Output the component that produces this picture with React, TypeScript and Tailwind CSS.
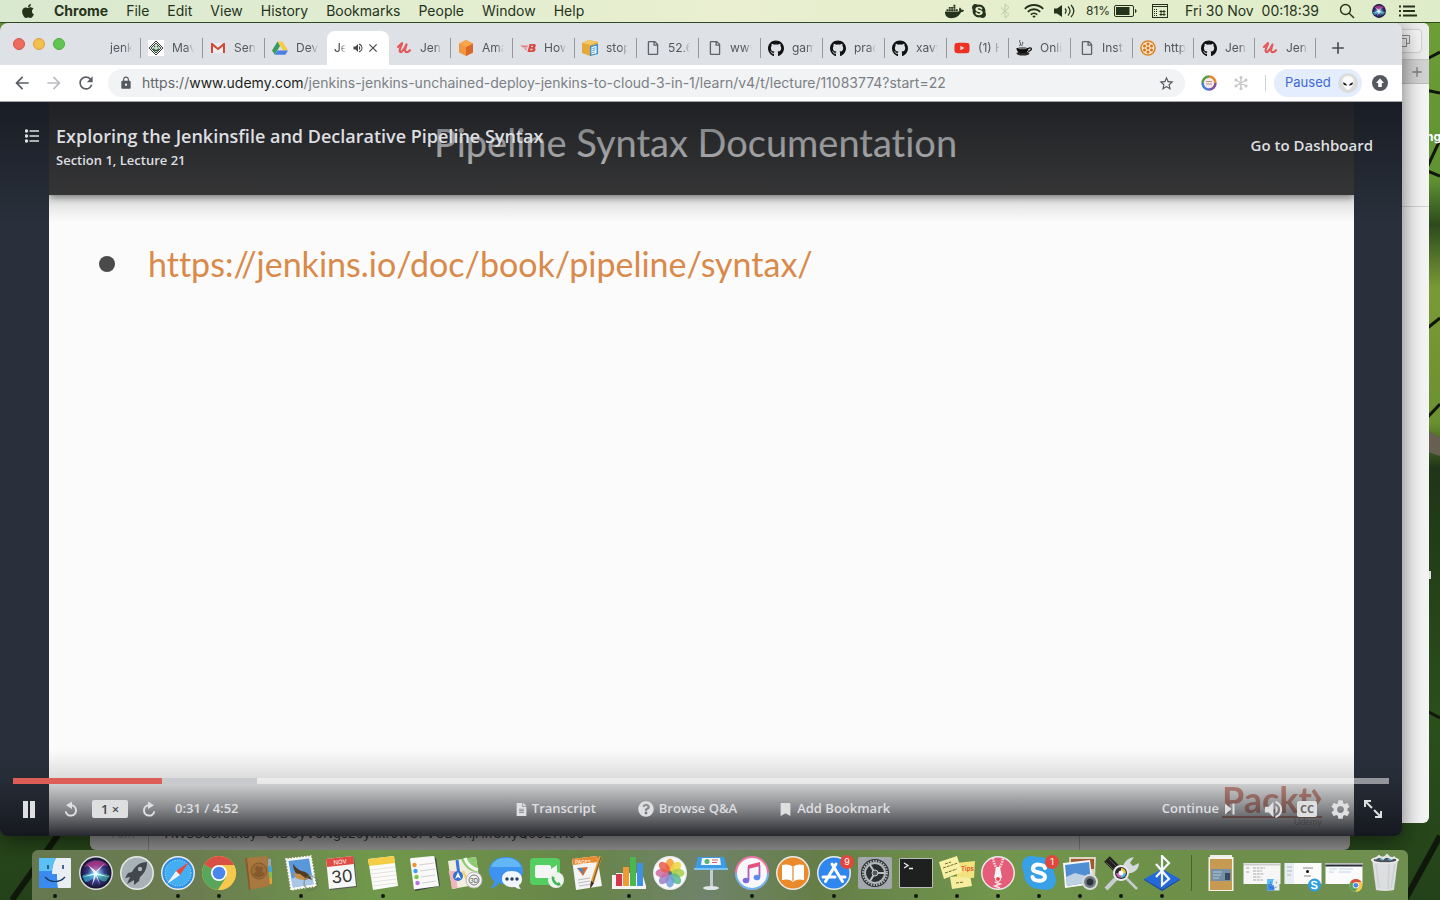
import React from "react";
import { FaApple, FaDocker, FaSkype, FaGithub, FaYoutube, FaFileAlt, FaQuestionCircle, FaBookmark, FaRegFile } from "react-icons/fa";
import {
  MdArrowBack,
  MdArrowForward,
  MdRefresh,
  MdLock,
  MdStarBorder,
  MdVolumeUp,
  MdClose,
  MdAdd,
  MdSettings,
} from "react-icons/md";

const menuItems = ["File", "Edit", "View", "History", "Bookmarks", "People", "Window", "Help"];

/* ---------- favicons ---------- */

const Udemy = () => (
  <svg viewBox="0 0 16 16" className="size-4" fill="none" stroke="#e45a5a" strokeWidth="2.2" strokeLinecap="round" strokeLinejoin="round">
    <path d="M2 7 C3.500 5.500 5 4 6 3.200 C5.500 6 3.300 9 3.600 11 C4 13.500 7.500 11.500 10.500 4.500 C9.500 8 8.300 11.500 9.800 12 C11.300 12.400 12.800 11.500 14 10.200" />
  </svg>
);

const Maven = () => (
  <svg viewBox="0 0 16 16" className="size-4">
    <rect width="16" height="16" fill="#fff" />
    <path d="M8 1 15 8 8 15 1 8Z" fill="none" stroke="#333" strokeWidth="1" />
    <path d="M8 3 13 8 8 13 3 8Z" fill="#cfe0cf" stroke="#444" strokeWidth="1" />
    <path d="M5.500 8.500a2.500 2 0 0 0 5 0M6 6.500h1.200M9 6.500h1.200" stroke="#255c35" fill="none" strokeWidth="1.300" />
  </svg>
);

const Gmail = () => (
  <svg viewBox="0 0 16 16" className="size-4">
    <path d="M1 3h14v10H1z" fill="#ececec" />
    <path d="M1 13V3h1.500L8 7.800 13.500 3H15v10h-2V6.200L8 10.300 3 6.200V13z" fill="#d14836" />
  </svg>
);

const Drive = () => (
  <svg viewBox="0 0 16 16" className="size-4">
    <path d="M5.500 1.500h5L16 10.500h-5z" fill="#f8cb45" />
    <path d="M5.500 1.500 8 6 2.800 14.800 0 10.500z" fill="#3a9b5c" />
    <path d="M5.500 10.500H16l-2.700 4.300H2.800z" fill="#4a7fe8" />
  </svg>
);

const Aws = () => (
  <svg viewBox="0 0 16 16" className="size-4">
    <path d="M8 0 15 3.500v9L8 16 1 12.500v-9z" fill="#f0963c" />
    <path d="M8 7v9l7-3.500v-9z" fill="#d9662a" />
    <path d="M8 0 15 3.500 8 7 1 3.500z" fill="#f6a54a" />
  </svg>
);

const Bmc = () => (
  <svg viewBox="0 0 16 16" className="size-4">
    <path d="M0 5.500h8l-.7 2H3zM3.500 8.500h3.500l-.7 2z" fill="#e08080" />
    <path d="M9.500 4h4.500c2.500 0 2.200 3 .6 3.700 1.700.6 1 4.300-1.900 4.300H7.500z M11.300 5.800 11 7h1.800l.3-1.200zM10.500 8.700l-.4 1.600h2.200l.3-1.600z" fill="#dc4a44" fillRule="evenodd" />
  </svg>
);

const Stopbox = () => (
  <svg viewBox="0 0 16 16" className="size-4">
    <path d="M0 3 7 0l9 2v11l-8 3-8-3z" fill="#e5a83b" />
    <path d="M0 3 7 0l9 2-8 3z" fill="#f3c766" />
    <path d="m8 6 8-2v10l-8 2z" fill="#3b8ed0" />
    <path d="m9.500 7 5-1.200v7.400l-5 1.200z" fill="#fff" />
    <path d="m10.500 8.500 3-.7M10.500 10.500l3-.7M10.500 12.500l2-.5" stroke="#3b8ed0" />
  </svg>
);

const Page = () => <FaRegFile className="ml-px size-3.5 text-[#5f6368]" />;
const Github = () => <FaGithub className="size-[17px] text-[#111]" />;
const Youtube = () => <FaYoutube className="size-[18px] text-[#ee3124]" />;

const Coffee = () => (
  <svg viewBox="0 0 16 16" className="size-4">
    <path d="M4.500 0c-3 1.500 2 3-1 6M6 2c2.500 1-1 2 0 4" stroke="#444" fill="none" />
    <ellipse cx="7" cy="13.500" rx="6.500" ry="2" fill="#2a2a2a" />
    <path d="M.5 8h12c0 3.500-2 5-6 5S.5 11.500.5 8z" fill="#0c0c0c" />
    <path d="M12 8.500c4-2 5 1.500 0 3" stroke="#0c0c0c" fill="none" strokeWidth="1.200" />
    <ellipse cx="6.500" cy="8.200" rx="4.500" ry="1.100" fill="#777" />
  </svg>
);

const Flower = () => (
  <svg viewBox="0 0 16 16" className="size-4">
    <circle cx="8" cy="8" r="7.800" fill="#dd8228" />
    <circle cx="8" cy="8" r="6.300" fill="#fbe7c8" />
    <g fill="#d0721c">
      <circle cx="8" cy="8" r="1.500" />
      <circle cx="8" cy="4" r="1.500" />
      <circle cx="8" cy="12" r="1.500" />
      <circle cx="4.500" cy="6" r="1.500" />
      <circle cx="11.500" cy="6" r="1.500" />
      <circle cx="4.500" cy="10" r="1.500" />
      <circle cx="11.500" cy="10" r="1.500" />
    </g>
  </svg>
);

type Tab = { text: string; icon?: React.ComponentType; narrow?: boolean };

const tabsBefore: Tab[] = [
  { text: "jenkins" },
  { text: "Maven", icon: Maven },
  { text: "Sent", icon: Gmail },
  { text: "DevOps", icon: Drive },
];

const tabsAfter: Tab[] = [
  { text: "Jenkins", icon: Udemy },
  { text: "Amazon", icon: Aws },
  { text: "How", icon: Bmc },
  { text: "stop", icon: Stopbox },
  { text: "52.66", icon: Page },
  { text: "www.", icon: Page },
  { text: "game", icon: Github },
  { text: "pract", icon: Github },
  { text: "xavy", icon: Github },
  { text: "(1) How", icon: Youtube },
  { text: "Online", icon: Coffee },
  { text: "Install", icon: Page },
  { text: "https", icon: Flower, narrow: true },
  { text: "Jenkins", icon: Github, narrow: true },
  { text: "Jenkins", icon: Udemy, narrow: true },
];

function TabItem({ tab, divider = true }: { tab: Tab; divider?: boolean }) {
  const Icon = tab.icon;
  return (
    <button className={`flex h-[34px] shrink-0 items-center pl-[7px] ${tab.narrow ? "w-[61px]" : "w-[62px]"}`}>
      <span className="flex size-4 shrink-0 items-center justify-center">{Icon && <Icon />}</span>
      <span className="ml-2 w-[22px] overflow-hidden text-left text-xs whitespace-nowrap text-[#54575c] [mask-image:linear-gradient(to_right,black_65%,transparent)]">
        {tab.text}
      </span>
      {divider && <span className="ml-auto h-5 w-px bg-[#94979c]" />}
    </button>
  );
}

/* ---------- menu bar ---------- */

function MenuBar() {
  return (
    <header className="relative z-10 flex h-[23px] items-center border-b border-[#2e4a22] bg-linear-to-r from-[#d9e9cf] via-[#e9efd0] to-[#dfecc9] pr-[23px] pl-5 text-sm text-[#26331c]">
      <FaApple className="size-4" />
      <nav className="ml-[18px] flex items-center gap-[18px]">
        <b className="font-bold">Chrome</b>
        {menuItems.map((m) => (
          <span key={m}>{m}</span>
        ))}
      </nav>
      <div className="ml-auto flex items-center">
        <FaDocker className="size-[19px]" />
        <FaSkype className="ml-[7px] size-4" />
        <svg viewBox="0 0 10 16" className="ml-[13px] h-4 w-2.5" fill="none" stroke="#bccbaa">
          <path d="M1 4.500 9 11.500 5 15V1l4 3.500L1 11.500" />
        </svg>
        <svg viewBox="0 0 20 16" className="ml-3.5 h-4 w-5" fill="none" stroke="currentColor" strokeWidth="1.800">
          <path d="M.8 5.800a13 13 0 0 1 18.400 0M3.800 8.800a8.800 8.800 0 0 1 12.400 0M6.800 11.600a4.600 4.600 0 0 1 6.400 0" />
          <path d="M8.300 13.300a2.400 2.400 0 0 1 3.400 0L10 15z" fill="currentColor" stroke="none" />
        </svg>
        <svg viewBox="0 0 22 16" className="ml-2.5 h-4 w-[22px]">
          <path d="M0 5.500h3L8 2v12L3 10.500H0z" fill="currentColor" />
          <path d="M11 5.500c1.300 1.500 1.300 3.500 0 5M14 3.500c2.500 2.700 2.500 6.300 0 9M17 2c3.500 3.700 3.500 8.300 0 12" fill="none" stroke="currentColor" strokeWidth="1.200" />
        </svg>
        <span className="ml-2.5 text-xs">81%</span>
        <svg viewBox="0 0 24 12" className="ml-1 h-3 w-6">
          <rect x="0.500" y="0.500" width="19" height="11" rx="1.500" fill="none" stroke="currentColor" />
          <rect x="2" y="2" width="13.500" height="8" fill="currentColor" />
          <path d="M21 4c2 .5 2 3.500 0 4z" fill="currentColor" />
        </svg>
        <svg viewBox="0 0 16 14" className="ml-3.5 h-3.5 w-4" fill="none" stroke="currentColor">
          <rect x="0.500" y="0.500" width="15" height="13" />
          <path d="M0 2.500h16" />
          <path d="M2 1.500h1M4 1.500h1" stroke="#e3edcc" />
          <path d="M2.500 5v8M4.500 5v8" strokeDasharray="1 1" />
          <path d="M9 6v6M12 6v6M7.500 7.500h6M7.500 10.500h6" />
        </svg>
        <span className="ml-[17px] whitespace-pre">Fri 30 Nov{"  "}00:18:39</span>
        <svg viewBox="0 0 16 16" className="ml-5 size-4" fill="none" stroke="currentColor" strokeWidth="1.400">
          <circle cx="6.500" cy="6.500" r="5" />
          <path d="m10.200 10.200 4.800 4.800" />
        </svg>
        <span className="ml-4">
          <SiriOrb className="size-4" />
        </span>
        <svg viewBox="0 0 18 12" className="ml-3 h-3 w-[18px]" stroke="currentColor" strokeWidth="1.800">
          <path d="M0 1.500h2M4 1.500h12M0 6h2M4 6h12M0 10.500h2M4 10.500h14" />
        </svg>
      </div>
    </header>
  );
}

function SiriOrb({ className }: { className: string }) {
  return (
    <svg viewBox="0 0 36 36" className={className}>
      <defs>
        <radialGradient id="siri">
          <stop offset="0" stopColor="#e8ffff" />
          <stop offset=".2" stopColor="#7cb4dc" />
          <stop offset=".55" stopColor="#3b3a8a" />
          <stop offset="1" stopColor="#14112c" />
        </radialGradient>
      </defs>
      <circle cx="18" cy="18" r="17" fill="#dcdde0" />
      <circle cx="18" cy="18" r="15.500" fill="url(#siri)" />
      <path d="M6 12c5-8 18-9 24-1-6-2-9 2-12 7-4-5-7-8-12-6z" fill="#d83a90" opacity=".6" />
      <path d="M4 21c5-3 9-3 14-3-3 6-7 9-11 9z" fill="#39c9e6" opacity=".6" />
      <path d="M32 21c-5-3-9-3-14-3 3 6 6 10 10 8z" fill="#42e0c0" opacity=".5" />
      <path d="M18 16 19 18 31 22 19 20 22 30 18 21 14 31 16 20 5 22 16 18 10 10 18 16 27 8 19 17z" fill="#f4ffff" opacity=".85" />
    </svg>
  );
}

/* ---------- browser chrome ---------- */

function TabStrip() {
  return (
    <div className="flex h-[42px] items-end overflow-hidden bg-[#dee1e6] pl-[13px]">
      <div className="mr-3.5 flex gap-2 self-center">
        <button aria-label="Close window" className="size-3 rounded-full border border-[#d9524a] bg-[#ed6a5e]" />
        <button aria-label="Minimise window" className="size-3 rounded-full border border-[#dba038] bg-[#f5bf4f]" />
        <button aria-label="Zoom window" className="size-3 rounded-full border border-[#4cab3d] bg-[#61c554]" />
      </div>
      {tabsBefore.map((t, i) => (
        <TabItem key={t.text} tab={t} divider={i < 3} />
      ))}
      <div className="flex h-[34px] w-[62px] shrink-0 items-center rounded-t-lg bg-white pl-[7px] text-xs text-[#3c4043]">
        <span className="w-3 overflow-hidden whitespace-nowrap [mask-image:linear-gradient(to_right,black_50%,transparent)]">Jenkins</span>
        <MdVolumeUp className="ml-1.5 size-3 text-[#45494d]" />
        <button aria-label="Close tab" className="ml-0.5">
          <MdClose className="size-3.5 text-[#45494d]" />
        </button>
      </div>
      {tabsAfter.map((t, i) => (
        <TabItem key={i} tab={t} />
      ))}
      <button aria-label="New tab" className="ml-3 flex h-[34px] items-center">
        <MdAdd className="size-5 text-[#494c50]" />
      </button>
    </div>
  );
}

function Toolbar() {
  return (
    <div className="flex h-[37px] items-center border-b border-[#a4a6a9] bg-white pr-3.5 pl-3.5 text-[#5a5d61]">
      <button aria-label="Back">
        <MdArrowBack className="-mx-0.5 size-5" />
      </button>
      <button aria-label="Forward" className="ml-4">
        <MdArrowForward className="-mx-0.5 size-5 text-[#bbbdc0]" />
      </button>
      <button aria-label="Reload" className="ml-4">
        <MdRefresh className="-mx-0.5 size-5" />
      </button>
      <div className="ml-3.5 flex h-7 flex-1 items-center overflow-hidden rounded-full bg-[#f1f3f4] pr-2.5 pl-[11px]">
        <MdLock className="size-3.5 shrink-0 text-[#55585c]" />
        <span className="ml-[9px] flex-1 overflow-hidden text-sm whitespace-nowrap text-[#7b8085]">
          <span className="text-[#63676b]">https://</span>
          <span className="text-[#1d1f22]">www.udemy.com</span>
          /jenkins-jenkins-unchained-deploy-jenkins-to-cloud-3-in-1/learn/v4/t/lecture/11083774?start=22
        </span>
        <MdStarBorder className="size-[17px] shrink-0 text-[#55585c]" />
      </div>
      <svg viewBox="0 0 16 16" className="ml-4 size-4" fill="none" strokeWidth="2.500">
        <circle cx="8" cy="8" r="5.500" fill="#f6e8e8" />
        <path d="M8 1.500A6.500 6.500 0 0 1 14.500 8" stroke="#e08a33" />
        <path d="M14.500 8A6.500 6.500 0 0 1 8 14.500" stroke="#7d4fa0" />
        <path d="M8 14.500A6.500 6.500 0 0 1 1.500 8" stroke="#3f80d8" />
        <path d="M1.500 8A6.500 6.500 0 0 1 8 1.500" stroke="#5a9a4a" />
        <path d="M5 6.500h6M5 9h6" stroke="#c09090" strokeWidth="1" />
      </svg>
      <svg viewBox="0 0 16 16" className="ml-4 size-4" stroke="#c6c7c9" strokeWidth="1.400" strokeLinecap="round">
        <path d="M8 2v12M2.800 5l10.400 6M13.200 5 2.800 11" />
        <g fill="#c6c7c9" stroke="none">
          <circle cx="8" cy="2.500" r="1.500" />
          <circle cx="8" cy="13.500" r="1.500" />
          <circle cx="3" cy="5" r="1.500" />
          <circle cx="13" cy="5" r="1.500" />
          <circle cx="3" cy="11" r="1.500" />
          <circle cx="13" cy="11" r="1.500" />
        </g>
      </svg>
      <span className="ml-4 h-4 w-px bg-[#cfd1d4]" />
      <button className="ml-2 flex h-7 w-[88px] items-center justify-between rounded-full bg-[#e4edfd] pr-1 pl-[11px] text-[13px] text-[#3c68d8]">
        Paused
        <svg viewBox="0 0 20 20" className="size-5">
          <circle cx="10" cy="10" r="10" fill="#dcdcdc" />
          <path d="M10 3c4.500 0 6 3 5.500 6.500S12 17 10 17s-5-4-5.500-7.500S5.500 3 10 3z" fill="#fafafa" />
          <path d="M5 9.500c2 0 4 1.500 4 3-2 .5-4-1-4-3zM15 9.500c-2 0-4 1.500-4 3 2 .5 4-1 4-3z" fill="#222" />
        </svg>
      </button>
      <svg viewBox="0 0 16 16" className="ml-2.5 size-4">
        <circle cx="8" cy="8" r="8" fill="#55585c" />
        <path d="M8 3.500 12 8H9.800v4H6.200V8H4z" fill="#fff" />
      </svg>
    </div>
  );
}

/* ---------- lecture player ---------- */

const RewindIcon = ({ className = "" }: { className?: string }) => (
  <svg viewBox="0 0 16 16" className={`size-4 ${className}`} fill="none" stroke="currentColor" strokeWidth="2">
    <path d="M7 4.200a5.200 5.200 0 1 1-5.300 6.200" />
    <path d="M8 .5v7.400L2 4.200z" fill="currentColor" stroke="none" />
  </svg>
);

function Slide() {
  return (
    <section className="relative mr-12 ml-[49px] flex flex-col overflow-hidden bg-[#fbfbfb] font-['Lato',sans-serif] font-normal [font-variant-ligatures:none] [grid-area:1/1]">
      <h1 className="flex h-[93px] items-center overflow-hidden bg-[#3b3b3b] pb-3 pl-[385px] text-[38px] whitespace-nowrap text-[#ececec] shadow-[0_2px_8px_rgba(0,0,0,0.5)]">
        Pipeline Syntax Documentation
      </h1>
      <ul className="mt-[46px] pl-[50px]">
        <li className="flex items-center text-[34px] whitespace-nowrap text-[#d98a4a]">
          <span className="mr-[33px] size-4 rounded-full bg-[#4a4a4a]" />
          <a href="https://jenkins.io/doc/book/pipeline/syntax/" className="leading-[46px]">
            https://jenkins.io/doc/book/pipeline/syntax/
          </a>
        </li>
      </ul>
      <div className="absolute right-8 bottom-2 w-[100px] text-[#c4543a] opacity-60">
        <div className="flex items-center justify-between border-b-2 border-[#c4543a] text-[36px] leading-[34px] font-bold">
          Packt
          <svg viewBox="0 0 10 22" className="h-[22px] w-2.5 shrink-0" fill="none" stroke="currentColor" strokeWidth="4">
            <path d="m1 2 6 9-6 9" />
          </svg>
        </div>
        <div className="h-2.5 text-right text-[9px] leading-[8px] text-[#777]">Udemy</div>
      </div>
    </section>
  );
}

function Player() {
  return (
    <main className="grid min-h-0 flex-1 grid-cols-1 grid-rows-1 bg-[#29303b] font-['Open_Sans',sans-serif] font-semibold text-[#dedfe1]">
      <Slide />
      <div className="relative flex flex-col justify-between [grid-area:1/1]">
        <div className="flex h-[120px] items-start bg-linear-to-b from-[#0e1016]/60 to-transparent pr-[29px] pl-[25px]">
          <button aria-label="Course content" className="mt-[27px]">
            <svg viewBox="0 0 14 14" className="size-3.5" stroke="currentColor" strokeWidth="1.500" fill="currentColor">
              <path d="M4.500 2H14M4.500 7H14M4.500 12H14" />
              <circle cx="1.500" cy="2" r="1" />
              <circle cx="1.500" cy="7" r="1" />
              <circle cx="1.500" cy="12" r="1" />
            </svg>
          </button>
          <div className="mt-[22px] ml-[17px]">
            <h2 className="text-lg leading-6">Exploring the Jenkinsfile and Declarative Pipeline Syntax</h2>
            <p className="text-[13px] leading-6">Section 1, Lecture 21</p>
          </div>
          <a href="#dashboard" className="mt-[31px] ml-auto text-[15px] leading-6">
            Go to Dashboard
          </a>
        </div>

        <div className="flex h-[86px] flex-col bg-[linear-gradient(to_bottom,transparent,rgba(20,22,28,0.12)_30%,rgba(20,22,28,0.2)_40%,rgba(20,22,28,0.5)_68%,rgba(20,22,28,0.92))] pt-7">
          <input
            type="range"
            aria-label="Seek"
            min={0}
            max={292}
            defaultValue={31}
            className="mx-[13px] block h-1.5 shrink-0 appearance-none bg-[linear-gradient(to_right,#dc5e57_10.8%,#c9cacd_10.8%,#c9cacd_17.7%,rgba(255,255,255,0.5)_17.7%)] [&::-webkit-slider-thumb]:size-0 [&::-webkit-slider-thumb]:appearance-none"
          />
          <div className="grid h-[50px] shrink-0 grid-cols-[1fr_auto_1fr] items-center pr-5 pl-[23px] text-[13px]">
            <div className="flex items-center">
              <button aria-label="Pause" className="flex h-[17px] gap-0.5">
                <span className="w-[5px] bg-[#dedfe1]" />
                <span className="w-[5px] bg-[#dedfe1]" />
              </button>
              <button aria-label="Rewind 15 seconds" className="ml-[29px]">
                <RewindIcon />
              </button>
              <button className="ml-3 h-[18px] w-9 rounded-xs bg-[#dedfe1] leading-[18px] text-[#44474d]">1 ×</button>
              <button aria-label="Forward 15 seconds" className="ml-3">
                <RewindIcon className="-scale-x-100" />
              </button>
              <span className="ml-[19px]">0:31 / 4:52</span>
            </div>
            <div className="flex items-center">
              <button className="flex items-center gap-1">
                <FaFileAlt className="size-[13px]" />
                Transcript
              </button>
              <button className="ml-[42px] flex items-center gap-[5px]">
                <FaQuestionCircle className="size-4" />
                Browse Q&A
              </button>
              <button className="ml-[42px] flex items-center gap-[5px]">
                <FaBookmark className="size-[13px]" />
                Add Bookmark
              </button>
            </div>
            <div className="flex items-center justify-end">
              <button className="flex items-center gap-1.5">
                Continue
                <svg viewBox="0 0 10 12" className="h-3 w-2.5" fill="currentColor">
                  <path d="M0 0.500 6.500 6 0 11.500zM7.500 0.500h2v11h-2z" />
                </svg>
              </button>
              <button aria-label="Volume" className="ml-[27px]">
                <MdVolumeUp className="size-[23px]" />
              </button>
              <button
                aria-label="Captions"
                className="ml-3 flex h-4 w-5 items-center justify-center rounded-xs bg-[#dedfe1] text-[11px] leading-4 font-bold text-[#6a6364]"
              >
                CC
              </button>
              <button aria-label="Settings" className="ml-3">
                <MdSettings className="size-[23px]" />
              </button>
              <button aria-label="Full screen" className="ml-3">
                <svg viewBox="0 0 18 18" className="size-[18px]" fill="none" stroke="currentColor" strokeWidth="2">
                  <path d="M1 7V1h6M1 1l7 7M17 11v6h-6M17 17l-7-7" />
                </svg>
              </button>
            </div>
          </div>
        </div>
      </div>
    </main>
  );
}

/* ---------- desktop and windows behind ---------- */

function Wallpaper() {
  return (
    <svg viewBox="0 0 1440 900" preserveAspectRatio="none" className="absolute inset-0 size-full">
      <defs>
        <linearGradient id="leaf" x1="0" y1="0" x2="0" y2="1">
          <stop offset="0" stopColor="#6f9f38" />
          <stop offset=".2" stopColor="#5f9232" />
          <stop offset=".25" stopColor="#2d4a1c" />
          <stop offset=".32" stopColor="#7a9a36" />
          <stop offset=".47" stopColor="#6c8f30" />
          <stop offset=".52" stopColor="#1f3517" />
          <stop offset=".8" stopColor="#2b4f1b" />
          <stop offset="1" stopColor="#24421a" />
        </linearGradient>
      </defs>
      <rect width="1440" height="900" fill="url(#leaf)" />
      <g stroke="#10180b" fill="none" strokeWidth="3">
        <path d="M1425 60l15-8M1425 90l15 3M1425 172l15-32M1425 170l15 6M1425 330l15-12M1425 420l15-16M1425 710l15 8" />
        <path d="M12 900 58 835M1405 900 1440 836" strokeWidth="6" />
      </g>
      <path d="M1428 430l12 8v18l-12-4z" fill="#675f4f" />
    </svg>
  );
}

function SafariWindow() {
  return (
    <div className="absolute top-[23px] right-[11px] bottom-[77px] flex w-[600px] flex-col items-stretch overflow-hidden rounded-md bg-[#f4f4f4]">
      <div className="flex h-[37px] items-center justify-end border-b border-[#c4c4c4] bg-[#ececec] pr-[7px]">
        <span className="flex h-6 w-9 items-center justify-center rounded border border-[#d0d0d0] bg-[#f4f4f4]">
          <svg viewBox="0 0 12 12" className="size-3" fill="none" stroke="#8c8c8c">
            <path d="M3.500.5h8v8h-3M.5 3.500h8v8h-8z" />
          </svg>
        </span>
      </div>
      <div className="flex h-6 items-center justify-end border-b border-[#bdbdbd] bg-[#d2d2d2] pr-1">
        <MdAdd className="size-4 text-[#7c7c7c]" />
      </div>
      <div className="h-[123px] border-b border-[#d2d2d2]" />
    </div>
  );
}

function SettingsWindow() {
  return (
    <div className="absolute inset-x-[90px] bottom-[50px] flex h-8 items-center overflow-hidden rounded-b-md bg-[#8e8e8e] text-[13px] text-[#2c2c2c]">
      <span className="w-[58px] pl-[19px] text-[#6c6c6c]">Text</span>
      <span className="h-full w-px bg-[#707070]" />
      <span className="pl-4">AWSSecretKey=GfDGyV0Ngs2oynkf0wGFVGDGrijHnGXyQo0z1Ti00</span>
      <span className="mr-[270px] ml-auto h-full w-px bg-[#707070]" />
    </div>
  );
}

/* ---------- dock ---------- */

const Rim = ({ fill, children }: { fill: string; children: React.ReactNode }) => (
  <>
    <circle cx="18" cy="18" r="17" fill="#e9ebec" />
    <circle cx="18" cy="18" r="15.500" fill={fill} />
    {children}
  </>
);

const FinderArt = () => (
  <>
    <rect x="2" y="3" width="32" height="30" rx="1" fill="#e9eef5" />
    <path d="M3 3h16c-3 5-4 10-4 16h5c0 5 0 9 1 14H2V3z" fill="#3b8af0" />
    <path d="M2 3h17c-3 5-4 10-4 13H2z" fill="#5cc0f8" />
    <path d="M11 10v4M26 10v4" stroke="#1c3a5c" strokeWidth="1.500" />
    <path d="M8 22c5 6 15 6 20 0" stroke="#1c3a5c" fill="none" strokeWidth="1.200" />
  </>
);

const ChromeArt = () => (
  <>
    <circle cx="18" cy="18" r="17" fill="#f6c94c" />
    <path d="M18 18 3.300 9.500A17 17 0 0 1 32.700 9.500L33 10H18z" fill="#d94f43" />
    <path d="M3.300 9.500A17 17 0 0 0 17 35l8.500-13L18 18z" fill="#58a55c" />
    <path d="M25.500 22 17 35a17 17 0 0 0 16-25H18z" fill="#f6c94c" />
    <circle cx="18" cy="18" r="8" fill="#fff" />
    <circle cx="18" cy="18" r="6.300" fill="#4a86ee" />
  </>
);

const petals = ["#f39b2e", "#ecd43c", "#a8cc45", "#58b88a", "#6d9fdb", "#9a80c6", "#cb6a9c", "#ea5b46"];
const petalTurn = petals.map((_, i) => `rotate(${i * 45} 18 18)`);

const dockArt: { name: string; running?: boolean; badge?: string; art: React.ReactNode }[] = [
  { name: "Finder", running: true, art: <FinderArt /> },
  { name: "Siri", art: null },
  {
    name: "Launchpad",
    art: (
      <Rim fill="#a9b2b7">
        <path d="M28 7c-7 0-12 4-15 10l-4 1-3 5 5-1-3 7 7-4v5l5-4 1-4c5-4 7-9 7-15z" fill="#41474c" />
        <circle cx="21" cy="14" r="2.200" fill="#a9b2b7" />
      </Rim>
    ),
  },
  {
    name: "Safari",
    running: true,
    art: (
      <Rim fill="#2c8ee6">
        <circle cx="18" cy="18" r="13" fill="#43aef2" stroke="#c3e6fb" strokeWidth="1" strokeDasharray="1 1.500" />
        <path d="m29 7-9 13-4-4z" fill="#e8493c" />
        <path d="m7 29 9-13 4 4z" fill="#f2f2f2" />
      </Rim>
    ),
  },
  { name: "Chrome", running: true, art: <ChromeArt /> },
  {
    name: "Contacts",
    art: (
      <g>
        <path d="M26 4h3v7h-3z" fill="#9aa7b0" />
        <path d="M26 11h4v6h-4z" fill="#43a7d8" />
        <path d="M26 17h4v6h-4z" fill="#86bb50" />
        <path d="M26 23h4v6h-4z" fill="#e4a33a" />
        <path d="M3 3 25 1 28 31 7 35z" fill="#a97841" />
        <path d="M3 3 5 3 8.500 34.700 7 35z" fill="#835a2d" />
        <circle cx="17" cy="16" r="8" fill="#9c6d39" stroke="#85592b" />
        <path d="M11 20c1-3 3-2 3-4-2-3 0-5 1.500-5s3 2 1.500 5c0 2 2 1 3 3M17 13c3-3 5 0 3 3 0 2 2 1 3 3-3 4-9 4-12 1" fill="#85592b" />
      </g>
    ),
  },
  {
    name: "Mail",
    running: true,
    art: (
      <g>
        <path d="M3 4 28 1 33 31 8 35z" fill="#f5f5f5" stroke="#fff" strokeWidth="1.500" strokeDasharray="1.500 1.500" />
        <path d="M5.500 6 26 3.500 30.500 29 10 32.500z" fill="#5a98dc" />
        <path d="M8 24c6-3 12-4 21-4l1.500 9L10 32.500z" fill="#a9c8e8" />
        <path d="M10 9c3 4 5 5 8 7 5 0 9 4 11 9-6-3-9-1-14-5-3-2-5-7-5-11z" fill="#533b22" />
        <path d="M17 19c-3 0-5-1-7-1l3 5c3 2 8 2 12 2z" fill="#c4904b" />
        <circle cx="28" cy="28" r="7" fill="none" stroke="#5f7157" strokeWidth="1.500" opacity=".5" />
      </g>
    ),
  },
  {
    name: "Calendar",
    art: (
      <g>
        <path d="M3 5 30 2 33 32 6 35z" fill="#555b50" />
        <path d="M2 4 29 1 32 31 5 34z" fill="#f7f7f7" />
        <path d="M2 4 29 1 30 9 3 12z" fill="#e04c42" />
        <text x="16" y="9" fontSize="6" fill="#fff" textAnchor="middle" transform="rotate(-6 16 6)">
          NOV
        </text>
        <text x="18" y="27.500" fontSize="17" fill="#333" textAnchor="middle" transform="rotate(-6 18 22)">
          30
        </text>
      </g>
    ),
  },
  {
    name: "Notes",
    running: true,
    art: (
      <g>
        <path d="M3 4 29 1 33 31 8 35z" fill="#fbfbf8" />
        <path d="M3 4 29 1 30 8 4 11z" fill="#f5ce46" />
        <path d="M5 15 30 12M5.500 19 31 16M6 23 31 20M7 27 32 24M7 31 32 28" stroke="#ddd" strokeWidth=".8" />
      </g>
    ),
  },
  {
    name: "Reminders",
    art: (
      <g>
        <path d="M5 5 30 3 34 31 9 36z" fill="#3d413f" />
        <path d="M4 4Q4 3 6 3L27 1Q28 1 28.500 2L33 31 8 34.500z" fill="#f9f9f9" />
        <circle cx="8.500" cy="10" r="2.200" fill="#f09038" />
        <circle cx="9.500" cy="16" r="2.200" fill="#3f9df0" />
        <circle cx="10.500" cy="22" r="2.200" fill="#74c93d" />
        <circle cx="11.500" cy="28" r="2.200" fill="#b873dc" />
        <path d="M13 10 28 8M14 16 29 14M15 22 29 20M16 28 30 26" stroke="#d2d2d2" />
      </g>
    ),
  },
  {
    name: "Maps",
    art: (
      <g>
        <path d="M1 6 29 2 33 29 5 34z" fill="#f2eede" />
        <path d="M1.500 16h7l2 17-5 1z" fill="#f2b4bd" />
        <path d="m14 4 15-2 2 15c-8 0-13-4-17-13z" fill="#8fcb72" />
        <path d="M18 3c2 7 6 10 13 12" stroke="#f7f7f7" strokeWidth="3" fill="none" />
        <path d="m10 5 2 15" stroke="#3a78d8" strokeWidth="3" />
        <path d="m16 16 7 16" stroke="#f3d06b" strokeWidth="2" />
        <circle cx="11" cy="21" r="5" fill="#3472cf" />
        <path d="m11 17 3 7-3-2-3 2z" fill="#fff" />
        <circle cx="27" cy="25" r="8" fill="#f2f2f2" stroke="#bbb" />
        <circle cx="27" cy="25" r="5" fill="none" stroke="#777" />
        <text x="27" y="27.500" fontSize="6" fill="#444" textAnchor="middle">
          3D
        </text>
      </g>
    ),
  },
  {
    name: "Messages",
    art: (
      <g>
        <path d="M18 2c10 0 17 6 17 14s-7 13-17 13c-3 0-5 0-7-1-2 3-5 5-9 5 3-2 4-4 4-7-3-3-5-6-5-10C1 8 8 2 18 2z" fill="#3d93ef" />
        <path d="M18 3c8 0 14 4 15 9H3C5 6 10 3 18 3z" fill="#62b7f6" />
        <path d="M24 16c6 0 10 3 10 8 0 3-1 5-3 6 0 2 1 3 2 4-3 0-5-1-6-2-8 1-13-3-13-8s4-8 10-8z" fill="#f0f6fb" />
        <g fill="#26435d">
          <circle cx="19" cy="24" r="1.700" />
          <circle cx="24" cy="24" r="1.700" />
          <circle cx="29" cy="24" r="1.700" />
        </g>
      </g>
    ),
  },
  {
    name: "FaceTime",
    art: (
      <g>
        <rect x="1" y="3" width="30" height="27" rx="4" fill="#54ce61" />
        <path d="M6 12q0-2 2-2h12q2 0 2 2v2l6-4v14l-6-4v1q0 2-2 2H8q-2 0-2-2z" fill="#f5f5f5" />
        <circle cx="27" cy="25" r="8" fill="#edf3ed" />
        <path d="M23 21c-2 5 5 12 9 9l-2-3-2 1-3-4 1-1z" fill="#41b552" />
      </g>
    ),
  },
  {
    name: "Pages",
    art: (
      <g>
        <path d="M2 4 27 1 32 31 6 35z" fill="#f4f4f4" />
        <path d="M2 4 27 1 28 7 3 10z" fill="#ea8a30" />
        <text x="5" y="8.500" fontSize="5" fill="#fff">
          PAGES
        </text>
        <path d="m7 13 11-1-5 9z" fill="#d96b2b" />
        <path d="M7 13h5l2 6z" fill="#3d8dd4" />
        <path d="M8 25 20 23M8 28 20 26M9 31 22 29" stroke="#bbb" />
        <path d="M29 1 32 2 24 28 20 34 21 26z" fill="#e99b2f" />
        <path d="M24 28 20 34 21 26z" fill="#2d3138" />
        <path d="m31 2-8 25" stroke="#555" />
      </g>
    ),
  },
  {
    name: "Numbers",
    running: true,
    art: (
      <g>
        <path d="M1 20h4v-2h26l4 13v3H1z" fill="#f5f5f5" />
        <path d="M5 19h6v12H5z" fill="#d6384a" />
        <path d="M12 12h6v19h-6z" fill="#ef9b35" />
        <path d="M19 2h6v29h-6z" fill="#4cb64e" />
        <path d="M26 8h6v23h-6z" fill="#3f8fe2" />
      </g>
    ),
  },
  {
    name: "Photos",
    art: (
      <Rim fill="#fafafa">
        {petals.map((c, i) => (
          <ellipse key={c} cx="18" cy="10" rx="4.300" ry="6.500" fill={c} opacity=".85" transform={petalTurn[i]} />
        ))}
        <circle cx="18" cy="18" r="2" fill="#3d5069" opacity=".8" />
      </Rim>
    ),
  },
  {
    name: "Keynote",
    art: (
      <g>
        <path d="M17 14h3v19h-3z" fill="#c3ccd2" />
        <ellipse cx="18" cy="33" rx="8" ry="2" fill="#dfe5e8" />
        <path d="M5 2h26l3 11H2z" fill="#3b9be6" />
        <path d="M9 3h18l1 7H8z" fill="#f4f8fb" />
        <path d="M1 13h34v2H1z" fill="#7fc3f2" />
        <circle cx="14" cy="6.500" r="2.500" fill="#58b36a" />
        <path d="M19 5h6M19 7.500h5" stroke="#d86060" />
      </g>
    ),
  },
  {
    name: "iTunes",
    running: true,
    art: (
      <>
        <circle cx="18" cy="18" r="17" fill="#e977a6" />
        <path d="M1 18a17 17 0 0 0 34 0z" fill="#6eb5ee" />
        <circle cx="18" cy="18" r="15" fill="#f8f8fb" />
        <path d="M14 10 26 7v4l-12 3z" fill="#e8507d" />
        <path d="M14.500 12v13M25.500 10v12" stroke="#b45bc0" strokeWidth="1.800" />
        <ellipse cx="12" cy="25.500" rx="3.300" ry="2.700" fill="#7c6ae0" />
        <ellipse cx="23" cy="22.500" rx="3.300" ry="2.700" fill="#5c8be8" />
      </>
    ),
  },
  {
    name: "Books",
    art: (
      <Rim fill="#eb8a2b">
        <path d="M18 12c-3-3-7-3-11-2v15c4-1 8-1 11 2 3-3 7-3 11-2V10c-4-1-8-1-11 2z" fill="#fff" />
        <path d="M18 12v14" stroke="#e3862d" strokeWidth="1.200" />
      </Rim>
    ),
  },
  {
    name: "App Store",
    running: true,
    badge: "9",
    art: (
      <Rim fill="#2f86ee">
        <path d="M20 9 9.500 26.500M16 9l10.500 17.500M7 22h12M24 22h5" stroke="#fff" strokeWidth="3" strokeLinecap="round" />
      </Rim>
    ),
  },
  {
    name: "System Preferences",
    art: (
      <g>
        <rect x="1" y="2" width="34" height="32" rx="2" fill="#a2a8ac" />
        <circle cx="18" cy="18" r="14" fill="#2c2f31" />
        <circle cx="18" cy="18" r="12" fill="none" stroke="#b4b9bb" strokeWidth="2" strokeDasharray="1.500 1.200" />
        <circle cx="18" cy="18" r="10" fill="none" stroke="#b4b9bb" strokeWidth="2" />
        <path d="M18 18h9M18 18l-5-8M18 18l-5 8" stroke="#b9bec0" strokeWidth="2" />
        <circle cx="18" cy="18" r="3" fill="#55595b" stroke="#c7cbcd" />
      </g>
    ),
  },
  {
    name: "Terminal",
    running: true,
    art: (
      <g>
        <rect x="1" y="3" width="34" height="30" rx="1.500" fill="#b9bcbc" />
        <rect x="2" y="4" width="32" height="28" fill="#1e2020" />
        <path d="m6 8 4 2.500L6 13M11 13.500h4" stroke="#f2f2f2" fill="none" strokeWidth="1.300" />
      </g>
    ),
  },
  {
    name: "Stickies",
    running: true,
    art: (
      <g>
        <path d="m11 22 20-2 2 11-20 3z" fill="#f6ee9e" />
        <path d="M17 8 36 6 35 23 18 22z" fill="#f4e27c" />
        <path d="m0 7 18-6 5 16-18 7z" fill="#f8f1a4" />
        <path d="m6 9 6-2M4 13l15-5M6 18l12-4M17 28l8-1" stroke="#706a34" strokeDasharray="3 1" />
        <text x="22" y="16" fontSize="6" fontWeight="700" fill="#dc5b35">
          Tips
        </text>
      </g>
    ),
  },
  {
    name: "Archiver",
    running: true,
    art: (
      <Rim fill="#e55d79">
        <path d="M13 3c1 6 3 10 5 11 2-1 4-5 5-11" stroke="#f6dbe1" strokeWidth="2.500" strokeDasharray="1.500 1" fill="none" />
        <path d="M16 12h4l2 11h-8z" fill="#f3f3f3" />
        <circle cx="18" cy="24" r="2.500" fill="#e44b4b" stroke="#fff" />
        <path d="m15 27 5 2-5 2 5 2" stroke="#f6dbe1" strokeWidth="1.800" fill="none" />
      </Rim>
    ),
  },
  {
    name: "Skype",
    running: true,
    badge: "1",
    art: (
      <g>
        <path d="M10 1c4 0 5 1 8 1 9 0 15 6 15 15 0 2 2 4 2 8 0 6-4 10-10 10-3 0-4-1-7-1C9 34 3 27 3 19c0-3-2-4-2-8C1 5 4 1 10 1z" fill="#37a0e6" />
        <path d="M24 13c-1-4-11-5-12 0-1 6 12 3 12 9 0 5-11 5-12.500 0" stroke="#fff" strokeWidth="4" fill="none" strokeLinecap="round" />
      </g>
    ),
  },
  {
    name: "Preview",
    running: true,
    art: (
      <g>
        <path d="M7 2h27l-1 20H8z" fill="#ddd4c4" />
        <path d="M9 4h23v10H9z" fill="#a1582f" />
        <path d="m1 8 27-3 3 24-28 4z" fill="#f7f7f7" />
        <path d="m3 10 24-3 2 20-24 4z" fill="#4f8ed2" />
        <path d="m4 22 9-4 15 4 1 5-24 4z" fill="#bdd2e3" />
        <circle cx="28" cy="27" r="7" fill="#717b81" stroke="#d8dadb" strokeWidth="2" />
        <circle cx="28" cy="27" r="3.500" fill="#2d3439" />
      </g>
    ),
  },
  {
    name: "ColorSync",
    running: true,
    art: (
      <g>
        <path d="M3 34 22 14" stroke="#c6cccf" strokeWidth="4" />
        <path d="M20 15c-1-5 3-12 11-13l-4 6 3 3 6-3c0 7-6 11-12 10z" fill="#d4dadd" />
        <path d="M4 4 16 16" stroke="#22201f" strokeWidth="8" />
        <path d="m3 7 11 11M6 4l11 11" stroke="#555" />
        <path d="m20 20 14 14" stroke="#c6cccf" strokeWidth="2.500" />
        <circle cx="18" cy="18" r="8" fill="#e9eaea" />
        <circle cx="18" cy="18" r="6" fill="#2a2a2a" />
        <path d="M18 18V13a5 5 0 0 1 5 5z" fill="#f1c63d" />
        <path d="M18 18h5a5 5 0 0 1-5 5z" fill="#4fb6d8" />
        <path d="M18 18v5a5 5 0 0 1-5-5z" fill="#cb56b4" />
        <circle cx="18" cy="18" r="2.500" fill="#fff" />
      </g>
    ),
  },
  {
    name: "Bluetooth",
    running: true,
    art: (
      <g>
        <path d="M18 14 36 24 18 35 0 24z" fill="#2568d8" />
        <path d="M0 24 18 34.500 36 24v1L18 36 0 25z" fill="#1847a8" />
        <path d="m12 9 13 15-7 6V1l7 7-13 14" fill="none" stroke="#f4f7fb" strokeWidth="2.200" />
      </g>
    ),
  },
];

const shelfArt: { name: string; art: React.ReactNode }[] = [
  {
    name: "Downloads",
    art: (
      <g>
        <path d="M7 0h22v4H7z" fill="#eee" />
        <rect x="5.500" y="2" width="25" height="34" fill="#f4f1e9" />
        <rect x="7" y="4" width="22" height="31" fill="#c69a51" />
        <rect x="8" y="14" width="20" height="12" fill="#7590a6" />
        <path d="M10 17h9M10 20h8M10 23h6" stroke="#b6c9d6" />
        <rect x="22" y="18" width="5" height="7" fill="#374b62" />
      </g>
    ),
  },
  {
    name: "Finder window",
    art: (
      <g>
        <rect x="-.5" y="8" width="37" height="21" fill="#f6f6f6" />
        <path d="M0 9.500h36" stroke="#ccc" strokeWidth="2" />
        <path d="M9 13h12M9 16h9M9 19h11M9 22h8M9 25h10M2 13h4M2 17h4" stroke="#aaa" strokeDasharray="3 .7" />
        <g transform="translate(22.500 23) scale(.38)">
          <FinderArt />
        </g>
      </g>
    ),
  },
  {
    name: "Skype window",
    art: (
      <g>
        <rect x="-.5" y="8" width="37" height="21" fill="#fbfbfb" />
        <path d="M0 8h9v21H0z" fill="#e8edf1" />
        <path d="M2 12h5M2 16h5M2 20h4" stroke="#a5bac9" />
        <path d="M18 13h10M19 21h7" stroke="#888" />
        <circle cx="22.500" cy="16.500" r="1.500" fill="#111" />
        <circle cx="29.500" cy="30" r="6.500" fill="#309ee2" />
        <path d="M32 28c-1-2-5-2-5 0 0 3 5 1 5 4 0 2-5 2-5.500 0" stroke="#fff" strokeWidth="1.600" fill="none" />
      </g>
    ),
  },
  {
    name: "Chrome window",
    art: (
      <g>
        <rect x="-.5" y="8" width="37" height="21" fill="#fbfbfb" />
        <path d="M-.5 8.500h37" stroke="#bbb" />
        <path d="M-.5 10.500h37" stroke="#272c3a" strokeWidth="2" />
        <path d="M3 14h8M13 14h14M3 17h5M13 17h12" stroke="#c5d4e6" />
        <g transform="translate(23 23.500) scale(.38)">
          <ChromeArt />
        </g>
      </g>
    ),
  },
  {
    name: "Trash",
    art: (
      <g>
        <path d="M5 4h26l-4 31q-9 2-18 0z" fill="#dcdedf" />
        <path d="m9 9 3 24M22 9l-1 25M28 9l-4 24" stroke="#cdd0d2" strokeWidth="1.500" />
        <ellipse cx="18" cy="5" rx="14" ry="3.500" fill="#f3f3f3" />
        <ellipse cx="18" cy="5" rx="11.500" ry="2.300" fill="#4f5357" />
        <path d="m8 4 4-3 4 3 4-4 4 4 4-2" stroke="#e2e5e6" strokeWidth="2" fill="none" />
        <path d="m13 4 3 1M21 4l3 1" stroke="#57a2cf" strokeWidth="1.500" />
      </g>
    ),
  },
];

function Dock() {
  return (
    <footer className="absolute inset-x-0 bottom-0 flex justify-center">
      <div className="flex h-[50px] items-start rounded-t-md bg-[linear-gradient(to_right,#66784f,#6b7d50_12%,#70984a_25%,#688549_40%,#70836a_49%,#657e48_57%,#71964c_70%,#6d8f49_85%,#6f8f51)] pt-[5px] pr-[3px] pl-0.5">
        {dockArt.map((d) => (
          <button key={d.name} aria-label={d.name} className="relative flex w-[41px] flex-col items-center">
            {d.art ? (
              <svg viewBox="0 0 36 36" className="size-9 font-['Inter',sans-serif]">
                {d.art}
              </svg>
            ) : (
              <SiriOrb className="size-9" />
            )}
            {d.running && <span className="mt-[3px] size-1 rounded-full bg-[#10170c]" />}
            {d.badge && (
              <span className="absolute top-0 right-0 flex size-3.5 items-center justify-center rounded-full bg-[#e0483e] text-[9px] text-white">
                {d.badge}
              </span>
            )}
          </button>
        ))}
        <span className="mr-2 ml-[9px] h-9 w-px bg-[#46652f]" />
        {shelfArt.map((d) => (
          <button key={d.name} aria-label={d.name} className="flex w-[41px] justify-center">
            <svg viewBox="0 0 36 36" className="size-9 overflow-visible">
              {d.art}
            </svg>
          </button>
        ))}
      </div>
    </footer>
  );
}

export default function App() {
  return (
    <div className="relative min-h-screen overflow-hidden font-['Inter',sans-serif]">
      <Wallpaper />
      <MenuBar />
      <span className="absolute top-[129px] -right-px text-xs font-bold text-white">ng</span>
      <span className="absolute top-[571px] right-[9px] h-2 w-0.5 bg-[#ddd]" />
      <SafariWindow />
      <SettingsWindow />
      <div className="absolute top-[23px] right-[38px] bottom-16 left-0 flex flex-col overflow-hidden rounded-lg shadow-[0_4px_22px_rgba(0,0,0,0.55)]">
        <TabStrip />
        <Toolbar />
        <Player />
      </div>
      <Dock />
    </div>
  );
}
